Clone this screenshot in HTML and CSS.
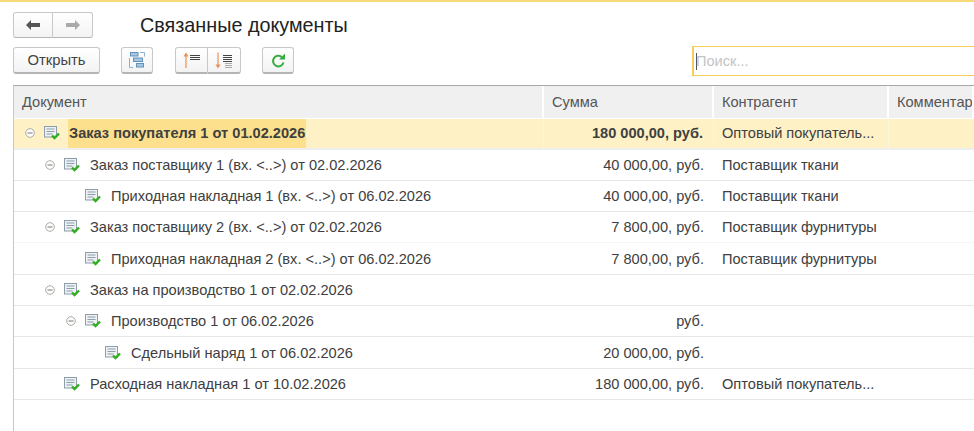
FILE: index.html
```html
<!DOCTYPE html>
<html lang="ru">
<head>
  <meta charset="UTF-8">
  <title>Связанные документы</title>
  <link rel="stylesheet" href="styles.css">
</head>
<body>
  <svg class="defs" width="0" height="0">
    <symbol id="doc" viewBox="0 0 16 14">
      <rect x="0.500" y="0.500" width="12" height="10.500" fill="#eef2f5" stroke="#8d9daa"/>
      <path d="M2.500 3h8M2.500 5.500h8M2.500 8h6" stroke="#8d9daa"/>
      <path d="M8 9.500l2.500 2.500L15 7.500" fill="none" stroke="#2fae1f" stroke-width="2.400"/>
    </symbol>
    <symbol id="minus" viewBox="0 0 10 10">
      <circle cx="5" cy="5" r="4.300" fill="#fff" stroke="#aaaaa2"/>
      <path d="M2.500 5h5" stroke="#77776f"/>
    </symbol>
  </svg>

  <div class="topline"></div>

  <div class="head">
    <div class="btn-group nav">
      <button class="btn"><svg width="16" height="12" viewBox="0 0 16 12"><path d="M1 6l5-5v3h9v4H6v3z" fill="#555"/></svg></button>
      <button class="btn"><svg width="16" height="12" viewBox="0 0 16 12"><path d="M15 6l-5-5v3H1v4h9v3z" fill="#aaa"/></svg></button>
    </div>
    <h1>Связанные документы</h1>
  </div>

  <div class="toolbar">
    <button class="btn open">Открыть</button>
    <button class="btn icon tree">
      <svg width="16" height="16" viewBox="0 0 16 16">
        <rect x="1.500" y="0.500" width="7.500" height="3.500" fill="#a9c6e0" stroke="#5f93bd"/>
        <rect x="4.500" y="6" width="9" height="3.500" fill="#a9c6e0" stroke="#5f93bd"/>
        <rect x="7.500" y="11.500" width="7" height="3.500" fill="#a9c6e0" stroke="#5f93bd"/>
        <path d="M0.500 6V15.500H4M11 0.500H15.500V4.500" fill="none" stroke="#8db2d2"/>
      </svg>
    </button>
    <div class="btn-group sort">
      <button class="btn icon">
        <svg width="18" height="17" viewBox="0 0 18 17">
          <path d="M3 16V3" stroke="#e8905a" stroke-width="1.200"/>
          <path d="M3 0.500L5.500 4.500H0.500z" fill="#e8905a"/>
          <path d="M7 3.500h10M7 5.500h10M7 7.500h10" stroke="#444"/>
        </svg>
      </button>
      <button class="btn icon">
        <svg width="18" height="17" viewBox="0 0 18 17">
          <path d="M3 0.500v13" stroke="#e8905a" stroke-width="1.200"/>
          <path d="M3 16.500l2.500-4H0.500z" fill="#e8905a"/>
          <path d="M8 3.500h9M8 5.500h9M8 7.500h9M8 9.500h9" stroke="#444"/>
          <path d="M10 11.500h7M10 13.500h7M10 15.500h7" stroke="#aaa"/>
        </svg>
      </button>
    </div>
    <button class="btn icon reload">
      <svg width="15" height="15" viewBox="0 0 15 15">
        <path d="M12.500 9.500a5.300 5.300 0 1 1-1.500-5.300" fill="none" stroke="#35ad3f" stroke-width="2"/>
        <path d="M8 6.500H14V0.500z" fill="#35ad3f"/>
      </svg>
    </button>
    <div class="search"><span class="caret"></span>Поиск...</div>
  </div>

  <div class="table">
    <div class="row header">
      <div class="cell">Документ</div>
      <div class="cell">Сумма</div>
      <div class="cell">Контрагент</div>
      <div class="cell">Комментарий</div>
    </div>

    <div class="row current">
      <div class="cell doc lvl0"><svg class="tg"><use href="#minus"/></svg><svg class="ic"><use href="#doc"/></svg><span class="name">Заказ покупателя 1 от 01.02.2026</span></div>
      <div class="cell num">180 000,00, руб.</div>
      <div class="cell">Оптовый покупатель...</div>
      <div class="cell"></div>
    </div>
    <div class="row">
      <div class="cell doc lvl1"><svg class="tg"><use href="#minus"/></svg><svg class="ic"><use href="#doc"/></svg><span class="name">Заказ поставщику 1 (вх. &lt;..&gt;) от 02.02.2026</span></div>
      <div class="cell num">40 000,00, руб.</div>
      <div class="cell">Поставщик ткани</div>
      <div class="cell"></div>
    </div>
    <div class="row">
      <div class="cell doc lvl2"><svg class="ic"><use href="#doc"/></svg><span class="name">Приходная накладная 1 (вх. &lt;..&gt;) от 06.02.2026</span></div>
      <div class="cell num">40 000,00, руб.</div>
      <div class="cell">Поставщик ткани</div>
      <div class="cell"></div>
    </div>
    <div class="row soft">
      <div class="cell doc lvl1"><svg class="tg"><use href="#minus"/></svg><svg class="ic"><use href="#doc"/></svg><span class="name">Заказ поставщику 2 (вх. &lt;..&gt;) от 02.02.2026</span></div>
      <div class="cell num">7 800,00, руб.</div>
      <div class="cell">Поставщик фурнитуры</div>
      <div class="cell"></div>
    </div>
    <div class="row">
      <div class="cell doc lvl2"><svg class="ic"><use href="#doc"/></svg><span class="name">Приходная накладная 2 (вх. &lt;..&gt;) от 06.02.2026</span></div>
      <div class="cell num">7 800,00, руб.</div>
      <div class="cell">Поставщик фурнитуры</div>
      <div class="cell"></div>
    </div>
    <div class="row">
      <div class="cell doc lvl1"><svg class="tg"><use href="#minus"/></svg><svg class="ic"><use href="#doc"/></svg><span class="name">Заказ на производство 1 от 02.02.2026</span></div>
      <div class="cell num"></div>
      <div class="cell"></div>
      <div class="cell"></div>
    </div>
    <div class="row">
      <div class="cell doc lvl2 toggled"><svg class="tg"><use href="#minus"/></svg><svg class="ic"><use href="#doc"/></svg><span class="name">Производство 1 от 06.02.2026</span></div>
      <div class="cell num">руб.</div>
      <div class="cell"></div>
      <div class="cell"></div>
    </div>
    <div class="row">
      <div class="cell doc lvl3"><svg class="ic"><use href="#doc"/></svg><span class="name">Сдельный наряд 1 от 06.02.2026</span></div>
      <div class="cell num">20 000,00, руб.</div>
      <div class="cell"></div>
      <div class="cell"></div>
    </div>
    <div class="row">
      <div class="cell doc lvl1 leaf"><svg class="ic"><use href="#doc"/></svg><span class="name">Расходная накладная 1 от 10.02.2026</span></div>
      <div class="cell num">180 000,00, руб.</div>
      <div class="cell">Оптовый покупатель...</div>
      <div class="cell"></div>
    </div>
  </div>
</body>
</html>
```

FILE: styles.css
```css
html, body {
  height: 100%;
}

body {
  margin: 0;
  background: #fff;
  color: #404040;
  font-family: "Liberation Sans", Arial, sans-serif;
  font-size: 14.600px;
  overflow: hidden;
  display: flex;
  flex-direction: column;
}

.defs {
  position: absolute;
}

.topline {
  height: 2px;
  background: #f5d97a;
  flex: none;
}

.head {
  display: flex;
  align-items: center;
  height: 26px;
  margin: 10px 0 0 13px;
  flex: none;
}

h1 {
  margin: 0 0 0 47px;
  font-size: 19.800px;
  font-weight: normal;
  color: #222;
}

.btn {
  display: flex;
  align-items: center;
  justify-content: center;
  margin: 0;
  padding: 0;
  border: 1px solid #c8c8c8;
  border-bottom: 2px solid #b4b4b4;
  border-radius: 3px;
  background: linear-gradient(#fff, #f3f3f3);
  font-family: inherit;
  font-size: 14.800px;
  color: #444;
}

.btn-group {
  display: flex;
}

.btn-group .btn:first-child {
  border-radius: 3px 0 0 3px;
  border-right: 1px solid #c8c8c8;
}

.btn-group .btn:last-child {
  border-radius: 0 3px 3px 0;
  border-left: none;
}

.nav .btn {
  width: 40px;
  height: 26px;
  border-bottom-width: 1px;
}

.toolbar {
  display: flex;
  align-items: flex-start;
  height: 30px;
  margin: 8px 0 0 13px;
  padding-top: 1px;
  box-sizing: border-box;
  flex: none;
}

.toolbar .btn {
  height: 27px;
}

.open {
  width: 87px;
}

.icon {
  width: 32px;
}

.tree {
  margin-left: 21px;
}

.sort {
  margin-left: 22px;
}

.sort .btn {
  width: 33px;
}

.reload {
  margin-left: 21px;
}

.search {
  margin-left: auto;
  width: 282px;
  height: 30px;
  margin-top: -1px;
  box-sizing: border-box;
  border: 1px solid #f5cf5a;
  border-left-width: 2px;
  border-right: none;
  display: flex;
  align-items: center;
  color: #c4c4c4;
}

.caret {
  width: 1px;
  height: 17px;
  margin-left: 2px;
  margin-right: -1px;
  background: #555;
}

.table {
  flex: 1;
  margin: 9px 0 0 13px;
  border-top: 1px solid #a8a8a8;
  border-left: 1px solid #c8c8c8;
}

.row {
  display: grid;
  grid-template-columns: 530px 170px 175px 1fr;
  height: 31.330px;
  box-sizing: border-box;
  border-bottom: 1px solid #e6e6e6;
}

.row.soft {
  border-bottom-color: #f6f6f6;
}

.cell {
  display: flex;
  align-items: center;
  padding-left: 8px;
  white-space: nowrap;
  overflow: hidden;
  min-width: 0;
}

.header {
  height: 32.500px;
  background: #f0f0f0;
  border-bottom: 1px solid #fff;
  color: #555;
}

.header .cell {
  border-right: 2px solid #fff;
  box-sizing: border-box;
}

.num {
  justify-content: flex-end;
  padding: 0 10px 0 0;
}

.current {
  height: 31px;
  background: #fdf1c5;
  border-bottom-width: 2px;
  border-bottom-color: #eeeeee;
  font-weight: bold;
}

.current .cell {
  border-right: 1px solid #fbf5dd;
}

.current .cell:nth-child(3) {
  font-weight: normal;
}

.current .name {
  background: #fde08e;
  align-self: stretch;
  display: flex;
  align-items: center;
  padding: 0 1px;
}

.tg {
  width: 10px;
  height: 10px;
  margin-right: 9px;
  flex: none;
}

.ic {
  width: 16px;
  height: 14px;
  margin-right: 10px;
  flex: none;
}

.current .ic {
  margin-right: 8px;
}

.lvl0 {
  padding-left: 11px;
}

.lvl1 {
  padding-left: 31px;
}

.lvl1.leaf {
  padding-left: 50px;
}

.lvl2 {
  padding-left: 71px;
}

.lvl2.toggled {
  padding-left: 52px;
}

.lvl3 {
  padding-left: 91px;
}
```
